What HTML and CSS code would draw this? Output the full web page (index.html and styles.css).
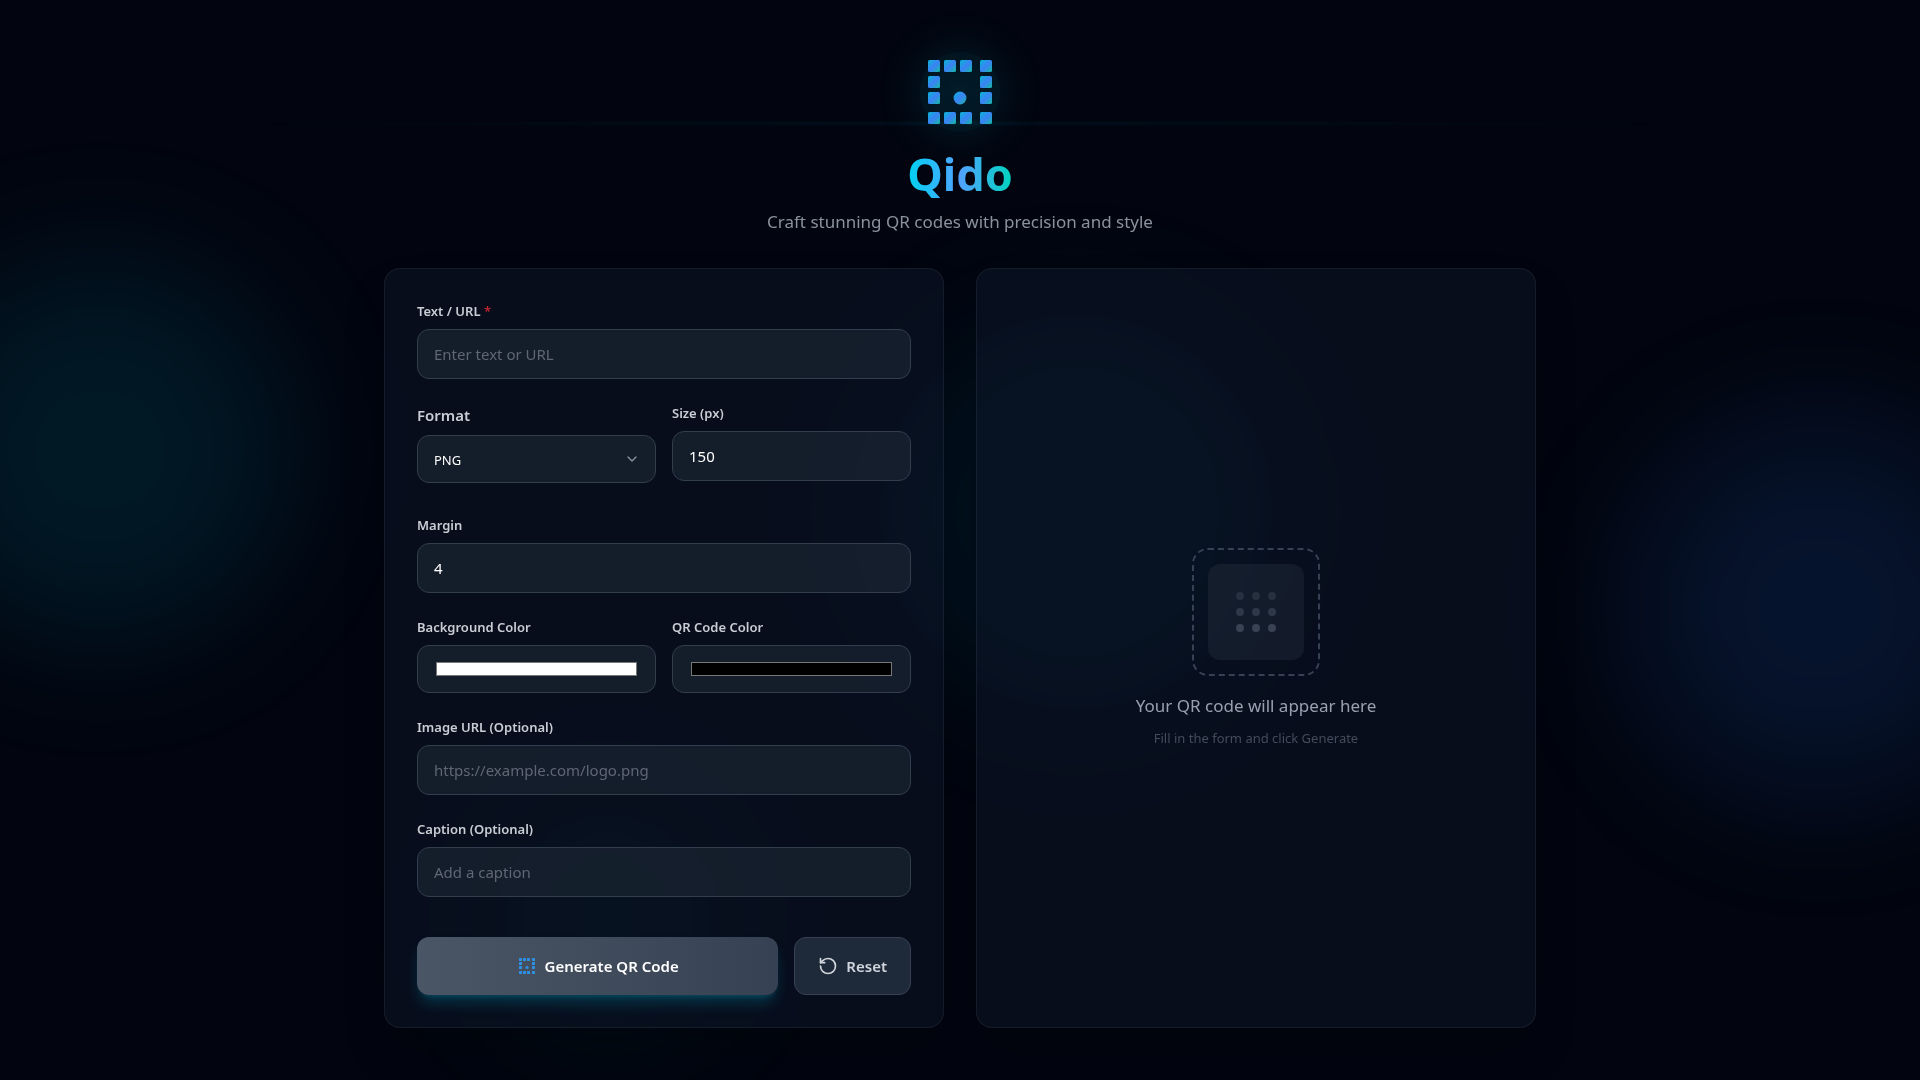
FILE: index.html
```html
<!DOCTYPE html>
<html lang="en">
<head>
<meta charset="utf-8">
<meta name="viewport" content="width=device-width, initial-scale=1">
<title>Qido</title>
<link rel="stylesheet" href="styles.css">
</head>
<body>
<svg class="defs" width="0" height="0" aria-hidden="true">
  <defs>
    <linearGradient id="brand" x1="0" y1="0" x2="1" y2="1">
      <stop offset="0" stop-color="#06b6d4"/><stop offset=".5" stop-color="#3b82f6"/><stop offset="1" stop-color="#14b8a6"/>
    </linearGradient>
    <symbol id="mark" viewBox="0 0 100 100">
      <g fill="url(#brand)">
        <rect x="10" y="10" width="15" height="15" rx="2" fill="url(#brand)"/><rect x="30" y="10" width="15" height="15" rx="2"/><rect x="50" y="10" width="15" height="15" rx="2"/><rect x="75" y="10" width="15" height="15" rx="2"/>
        <rect x="10" y="30" width="15" height="15" rx="2"/><rect x="75" y="30" width="15" height="15" rx="2"/>
        <rect x="10" y="50" width="15" height="15" rx="2"/><rect x="75" y="50" width="15" height="15" rx="2"/>
        <rect x="10" y="75" width="15" height="15" rx="2"/><rect x="30" y="75" width="15" height="15" rx="2"/><rect x="50" y="75" width="15" height="15" rx="2"/><rect x="75" y="75" width="15" height="15" rx="2"/>
        <circle cx="50" cy="57.5" r="8"/>
      </g>
    </symbol>
  </defs>
</svg>
<div class="backdrop" aria-hidden="true">
  <span class="orb orb-cyan"></span>
  <span class="orb orb-blue"></span>
  <span class="orb orb-center"></span>
  <span class="orb orb-teal"></span>
  <span class="beam"></span>
</div>
<div class="page">
  <header class="header">
    <div class="logo"><svg class="logo-mark" aria-hidden="true"><use href="#mark"/></svg></div>
    <h1 class="title">Qido</h1>
    <p class="tagline">Craft stunning QR codes with precision and style</p>
  </header>
  <main class="panels">
    <form class="card form">
      <div class="field">
        <label class="label" for="text">Text / URL <span class="required">*</span></label>
        <input class="input" id="text" type="text" placeholder="Enter text or URL">
      </div>
      <div class="row">
        <div class="field field-format">
          <label class="label label-large" for="format">Format</label>
          <div class="select-wrap">
            <select class="input select" id="format"><option>PNG</option><option>SVG</option></select>
            <svg class="chevron" viewBox="0 0 24 24" aria-hidden="true"><path d="m6 9 6 6 6-6"/></svg>
          </div>
        </div>
        <div class="field">
          <label class="label" for="size">Size (px)</label>
          <input class="input" id="size" type="text" inputmode="numeric" value="150">
        </div>
      </div>
      <div class="field">
        <label class="label" for="margin">Margin</label>
        <input class="input" id="margin" type="text" inputmode="numeric" value="4">
      </div>
      <div class="row">
        <div class="field">
          <label class="label" for="bg">Background Color</label>
          <input class="input color" id="bg" type="color" value="#ffffff">
        </div>
        <div class="field">
          <label class="label" for="fg">QR Code Color</label>
          <input class="input color" id="fg" type="color" value="#000000">
        </div>
      </div>
      <div class="field">
        <label class="label" for="image">Image URL (Optional)</label>
        <input class="input" id="image" type="text" placeholder="https://example.com/logo.png">
      </div>
      <div class="field">
        <label class="label" for="caption">Caption (Optional)</label>
        <input class="input" id="caption" type="text" placeholder="Add a caption">
      </div>
      <div class="actions">
        <button class="button generate" type="submit"><svg class="icon" aria-hidden="true"><use href="#mark"/></svg>Generate QR Code</button>
        <button class="button reset" type="reset"><svg class="icon line" viewBox="0 0 24 24" aria-hidden="true"><path d="M3 12a9 9 0 1 0 9-9 9.75 9.75 0 0 0-6.74 2.74L3 8"/><path d="M3 3v5h5"/></svg>Reset</button>
      </div>
    </form>
    <section class="card preview">
      <div class="placeholder">
        <div class="tile">
          <svg class="dots" viewBox="0 0 40 40" aria-hidden="true">
            <g opacity=".5"><circle cx="4" cy="4" r="4"/><circle cx="20" cy="4" r="4"/><circle cx="36" cy="4" r="4"/></g>
            <g opacity=".7"><circle cx="4" cy="20" r="4"/><circle cx="20" cy="20" r="4"/><circle cx="36" cy="20" r="4"/></g>
            <g opacity=".95"><circle cx="4" cy="36" r="4"/><circle cx="20" cy="36" r="4"/><circle cx="36" cy="36" r="4"/></g>
          </svg>
        </div>
      </div>
      <p class="preview-title">Your QR code will appear here</p>
      <p class="preview-hint">Fill in the form and click Generate</p>
    </section>
  </main>
</div>
</body>
</html>
```
FILE: styles.css
```css
*, *::before, *::after { box-sizing: border-box; }

body {
  margin: 0;
  min-height: 100vh;
  background: #02050f;
  color: #fff;
  font-family: "Segoe UI", "Noto Sans", "Open Sans", sans-serif;
  font-size: 15px;
  line-height: 24px;
}

h1, p { margin: 0; }
.defs { position: absolute; }

/* Ambient light behind the page */
.backdrop {
  position: fixed;
  inset: 0;
  z-index: -1;
  overflow: hidden;
}
.orb {
  position: absolute;
  border-radius: 50%;
  filter: blur(64px);
}
.orb-cyan { left: -92px; top: 258px; width: 384px; height: 384px; background: rgba(0, 184, 219, .11); }
.orb-blue { right: -92px; top: 416px; width: 384px; height: 384px; background: rgba(43, 127, 255, .12); }
.orb-center { left: 876px; top: 312px; width: 400px; height: 400px; background: rgba(0, 150, 190, .08); }
.orb-teal { left: 480px; top: 790px; width: 256px; height: 256px; background: rgba(0, 187, 167, .05); }
.beam {
  position: absolute;
  left: 13%;
  right: 13%;
  top: 122px;
  height: 3px;
  background: linear-gradient(90deg, transparent, rgba(6, 182, 212, .08), transparent);
  filter: blur(1px);
}

.page {
  max-width: 1152px;
  margin: 0 auto;
  padding: 52px 0;
}

.header {
  display: flex;
  flex-direction: column;
  align-items: center;
  padding-bottom: 32px;
  text-align: center;
}
.logo {
  display: flex;
  border-radius: 50%;
  background: radial-gradient(circle, rgba(6, 182, 212, .13), rgba(6, 182, 212, .08));
  box-shadow: 0 0 40px 8px rgba(6, 182, 212, .1);
}
.logo-mark { width: 80px; height: 80px; }
.title {
  margin: 16px 0 8px;
  font-size: 45px;
  line-height: 52px;
  font-weight: 700;
  background: linear-gradient(90deg, #00d3f2, #51a2ff 50%, #00d5be);
  background-clip: text;
  -webkit-background-clip: text;
  color: transparent;
}
.tagline { font-size: 17px; line-height: 28px; color: #8b919e; }

.panels {
  display: grid;
  grid-template-columns: 1fr 1fr;
  gap: 32px;
}
.card {
  padding: 32px;
  border: 1px solid rgba(55, 65, 81, .3);
  border-radius: 16px;
  background: rgba(16, 24, 44, .45);
  box-shadow: 0 25px 50px -12px rgba(0, 0, 0, .25);
}
.form { display: flex; flex-direction: column; gap: 24px; }
.row { display: grid; grid-template-columns: 1fr 1fr; gap: 16px; }
.field { display: flex; flex-direction: column; gap: 8px; min-width: 0; }
.field-format { padding-bottom: 8px; }
.label { font-size: 13px; line-height: 20px; font-weight: 600; color: #c9cdd4; }
.label-large { font-size: 15px; line-height: 24px; }
.required { color: #c1272d; }

.input {
  width: 100%;
  height: 50px;
  padding: 12px 16px;
  border: 1px solid #323d4d;
  border-radius: 12px;
  background: rgba(32, 45, 58, .52);
  color: #fff;
  font: inherit;
}
.input::placeholder { color: #5f6774; opacity: 1; }
.select-wrap { position: relative; }
.select { display: block; height: 48px; appearance: none; font-size: 13px; }
.chevron {
  position: absolute;
  top: 16px;
  right: 16px;
  width: 16px;
  height: 16px;
  fill: none;
  stroke: #8b919e;
  stroke-width: 2;
  stroke-linecap: round;
  stroke-linejoin: round;
  pointer-events: none;
}
.color { height: 48px; }

.actions { display: flex; gap: 16px; padding-top: 16px; }
.button {
  display: flex;
  align-items: center;
  justify-content: center;
  gap: 8px;
  height: 58px;
  padding: 0 23px;
  border: 1px solid #374151;
  border-radius: 12px;
  font: inherit;
  font-weight: 600;
}
.generate {
  flex: 1;
  border: 0;
  background: linear-gradient(90deg, #4a5565, #364153);
  box-shadow: 0 10px 15px -3px rgba(0, 184, 219, .25), 0 4px 6px -4px rgba(0, 184, 219, .25);
  color: #fff;
}
.reset { background: #1e2939; color: #d1d5dc; }
.icon { width: 20px; height: 20px; }
.line { fill: none; stroke: currentColor; stroke-width: 2; stroke-linecap: round; stroke-linejoin: round; }

.preview {
  display: flex;
  flex-direction: column;
  align-items: center;
  justify-content: center;
  text-align: center;
}
.placeholder {
  display: grid;
  place-items: center;
  width: 128px;
  height: 128px;
  border: 2px dashed #364153;
  border-radius: 16px;
}
.tile {
  display: grid;
  place-items: center;
  width: 96px;
  height: 96px;
  border-radius: 12px;
  background: rgba(31, 41, 55, .5);
}
.dots { width: 40px; height: 40px; fill: #3a4555; }
.preview-title { margin-top: 16px; font-size: 17px; line-height: 28px; color: #99a1af; }
.preview-hint { margin-top: 8px; font-size: 13px; line-height: 20px; color: #434c5a; }

@media (max-width: 1200px) {
  .page { padding: 48px 24px; }
}
@media (max-width: 800px) {
  .panels { grid-template-columns: 1fr; }
}
```
